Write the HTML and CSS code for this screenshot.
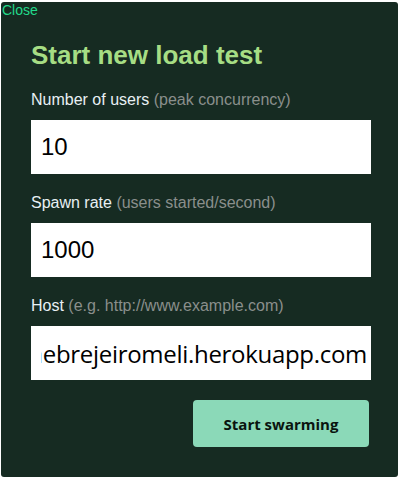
FILE: index.html
```html
<!DOCTYPE html>
<html>
<head>
<meta charset="utf-8">
<link rel="stylesheet" href="styles.css">
</head>
<body>
<a class="close" href="#">Close</a>
<div class="modal">
  <h2 class="title">Start new load test</h2>
  <form class="form">
    <div class="field">
      <label class="label">Number of users <span class="hint">(peak concurrency)</span></label>
      <input class="input" type="text" value="10">
    </div>
    <div class="field">
      <label class="label">Spawn rate <span class="hint">(users started/second)</span></label>
      <input class="input" type="text" value="1000">
    </div>
    <div class="field">
      <label class="label">Host <span class="hint">(e.g. http://www.example.com)</span></label>
      <input class="input input-host" type="text" value="https://cervejariamenebrejeiromeli.herokuapp.com">
    </div>
    <div class="actions">
      <button class="button" type="button">Start swarming</button>
    </div>
  </form>
</div>
</body>
</html>
```
FILE: styles.css
```css
html, body {
  margin: 0;
  padding: 0;
  background: #ffffff;
}
body {
  padding: 2px 2px 1px 1px;
  font-family: "Liberation Sans", Arial, sans-serif;
}
.close {
  position: absolute;
  left: 2px;
  top: 2px;
  font-size: 14px;
  line-height: 16px;
  color: #22d98b;
  text-decoration: none;
  z-index: 2;
}
.modal {
  background: #162b22;
  border-radius: 3px;
  padding: 38px 27px 30px 30px;
}
.title {
  margin: 0 0 21px 0;
  font-size: 26px;
  line-height: 30px;
  font-weight: bold;
  color: #a6dd84;
}
.form {
  display: flex;
  flex-direction: column;
  gap: 20px;
  margin: 0;
}
.field {
  display: flex;
  flex-direction: column;
}
.label {
  font-size: 16px;
  line-height: 18px;
  color: #e8f0f4;
  margin-bottom: 11px;
}
.hint {
  color: #8a8f8c;
}
.input {
  box-sizing: border-box;
  width: 340px;
  height: 54px;
  border: none;
  outline: none;
  padding: 0 10px;
  margin: 0;
  font-family: "Liberation Sans", Arial, sans-serif;
  font-size: 24px;
  color: #000;
  background: #fff;
}
.input-host {
  direction: rtl;
  padding: 0 4px 0 10px;
  font-family: "Open Sans", sans-serif;
  font-size: 24px;
  letter-spacing: -0.3px;
}
.actions {
  display: flex;
  justify-content: flex-end;
  padding-right: 2px;
}
.button {
  width: 176px;
  height: 47px;
  border: none;
  border-radius: 4px;
  background: #8bd9b8;
  color: #0a140f;
  font-family: "Open Sans", sans-serif;
  font-weight: 700;
  font-size: 15px;
  cursor: pointer;
}
```
